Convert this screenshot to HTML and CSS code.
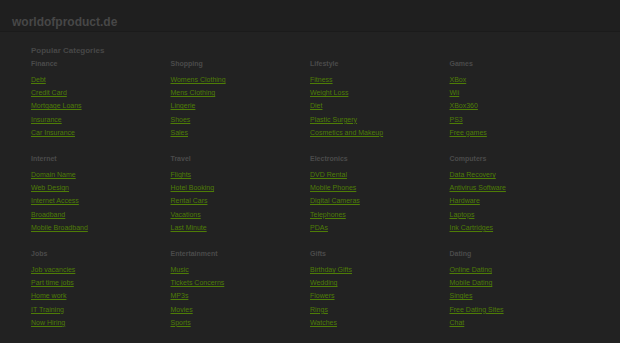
FILE: index.html
```html
<!DOCTYPE html>
<html>
    <head>
        <meta charset="utf-8">
        <title>worldofproduct.de</title>

        <link rel="stylesheet" href="styles.css">
    </head>
    <body>

        <header class="top-bar">
            <h1 class="site-title">worldofproduct.de</h1>
        </header>

        <div class="page-wrapper">
            <h2 class="section-title">Popular Categories</h2>

            <div class="categories">
                <!-- row 1 -->
                <div class="category">
                    <h3>Finance</h3>
                    <ul>
                        <li><a href="#">Debt</a></li>
                        <li><a href="#">Credit Card</a></li>
                        <li><a href="#">Mortgage Loans</a></li>
                        <li><a href="#">Insurance</a></li>
                        <li><a href="#">Car Insurance</a></li>
                    </ul>
                </div>
                <div class="category">
                    <h3>Shopping</h3>
                    <ul>
                        <li><a href="#">Womens Clothing</a></li>
                        <li><a href="#">Mens Clothing</a></li>
                        <li><a href="#">Lingerie</a></li>
                        <li><a href="#">Shoes</a></li>
                        <li><a href="#">Sales</a></li>
                    </ul>
                </div>
                <div class="category">
                    <h3>Lifestyle</h3>
                    <ul>
                        <li><a href="#">Fitness</a></li>
                        <li><a href="#">Weight Loss</a></li>
                        <li><a href="#">Diet</a></li>
                        <li><a href="#">Plastic Surgery</a></li>
                        <li><a href="#">Cosmetics and Makeup</a></li>
                    </ul>
                </div>
                <div class="category">
                    <h3>Games</h3>
                    <ul>
                        <li><a href="#">XBox</a></li>
                        <li><a href="#">Wii</a></li>
                        <li><a href="#">XBox360</a></li>
                        <li><a href="#">PS3</a></li>
                        <li><a href="#">Free games</a></li>
                    </ul>
                </div>

                <!-- row 2 -->
                <div class="category">
                    <h3>Internet</h3>
                    <ul>
                        <li><a href="#">Domain Name</a></li>
                        <li><a href="#">Web Design</a></li>
                        <li><a href="#">Internet Access</a></li>
                        <li><a href="#">Broadband</a></li>
                        <li><a href="#">Mobile Broadband</a></li>
                    </ul>
                </div>
                <div class="category">
                    <h3>Travel</h3>
                    <ul>
                        <li><a href="#">Flights</a></li>
                        <li><a href="#">Hotel Booking</a></li>
                        <li><a href="#">Rental Cars</a></li>
                        <li><a href="#">Vacations</a></li>
                        <li><a href="#">Last Minute</a></li>
                    </ul>
                </div>
                <div class="category">
                    <h3>Electronics</h3>
                    <ul>
                        <li><a href="#">DVD Rental</a></li>
                        <li><a href="#">Mobile Phones</a></li>
                        <li><a href="#">Digital Cameras</a></li>
                        <li><a href="#">Telephones</a></li>
                        <li><a href="#">PDAs</a></li>
                    </ul>
                </div>
                <div class="category">
                    <h3>Computers</h3>
                    <ul>
                        <li><a href="#">Data Recovery</a></li>
                        <li><a href="#">Antivirus Software</a></li>
                        <li><a href="#">Hardware</a></li>
                        <li><a href="#">Laptops</a></li>
                        <li><a href="#">Ink Cartridges</a></li>
                    </ul>
                </div>

                <!-- row 3 -->
                <div class="category">
                    <h3>Jobs</h3>
                    <ul>
                        <li><a href="#">Job vacancies</a></li>
                        <li><a href="#">Part time jobs</a></li>
                        <li><a href="#">Home work</a></li>
                        <li><a href="#">IT Training</a></li>
                        <li><a href="#">Now Hiring</a></li>
                    </ul>
                </div>
                <div class="category">
                    <h3>Entertainment</h3>
                    <ul>
                        <li><a href="#">Music</a></li>
                        <li><a href="#">Tickets Concerns</a></li>
                        <li><a href="#">MP3s</a></li>
                        <li><a href="#">Movies</a></li>
                        <li><a href="#">Sports</a></li>
                    </ul>
                </div>
                <div class="category">
                    <h3>Gifts</h3>
                    <ul>
                        <li><a href="#">Birthday Gifts</a></li>
                        <li><a href="#">Wedding</a></li>
                        <li><a href="#">Flowers</a></li>
                        <li><a href="#">Rings</a></li>
                        <li><a href="#">Watches</a></li>
                    </ul>
                </div>
                <div class="category">
                    <h3>Dating</h3>
                    <ul>
                        <li><a href="#">Online Dating</a></li>
                        <li><a href="#">Mobile Dating</a></li>
                        <li><a href="#">Singles</a></li>
                        <li><a href="#">Free Dating Sites</a></li>
                        <li><a href="#">Chat</a></li>
                    </ul>
                </div>
            </div>
        </div>

    </body>
</html>
```

FILE: styles.css
```css
/* Base */

body {
    margin: 0;
    background: #222222;
    font-family: "Liberation Sans", Arial, sans-serif;
    color: #474747;
}

/* Top bar */

.top-bar {
    height: 32px;
    box-sizing: border-box;
    padding: 15px 12px 0;
    background: #1f1f1f;
    border-bottom: 1px solid #1b1b1b;
}

.site-title {
    margin: 0;
    font-size: 12px;
    line-height: 14px;
    font-weight: bold;
    color: #474747;
}

/* Categories */

.page-wrapper {
    padding: 14px 31px 0;
}

.section-title {
    margin: 0 0 3px;
    font-size: 8px;
    line-height: 10px;
    font-weight: bold;
    color: #474747;
}

.categories {
    display: grid;
    grid-template-columns: repeat(4, 139.5px);
}

.category {
    margin-bottom: 15px;
}

.category h3 {
    margin: 0 0 4px;
    font-size: 7px;
    line-height: 10px;
    font-weight: bold;
    color: #4a4a4a;
}

.category ul {
    margin: 0;
    padding: 0;
    list-style: none;
}

.category li {
    font-size: 7px;
    line-height: 13.2px;
}

.category a {
    color: #4e7d06;
    text-decoration: underline;
}
```
